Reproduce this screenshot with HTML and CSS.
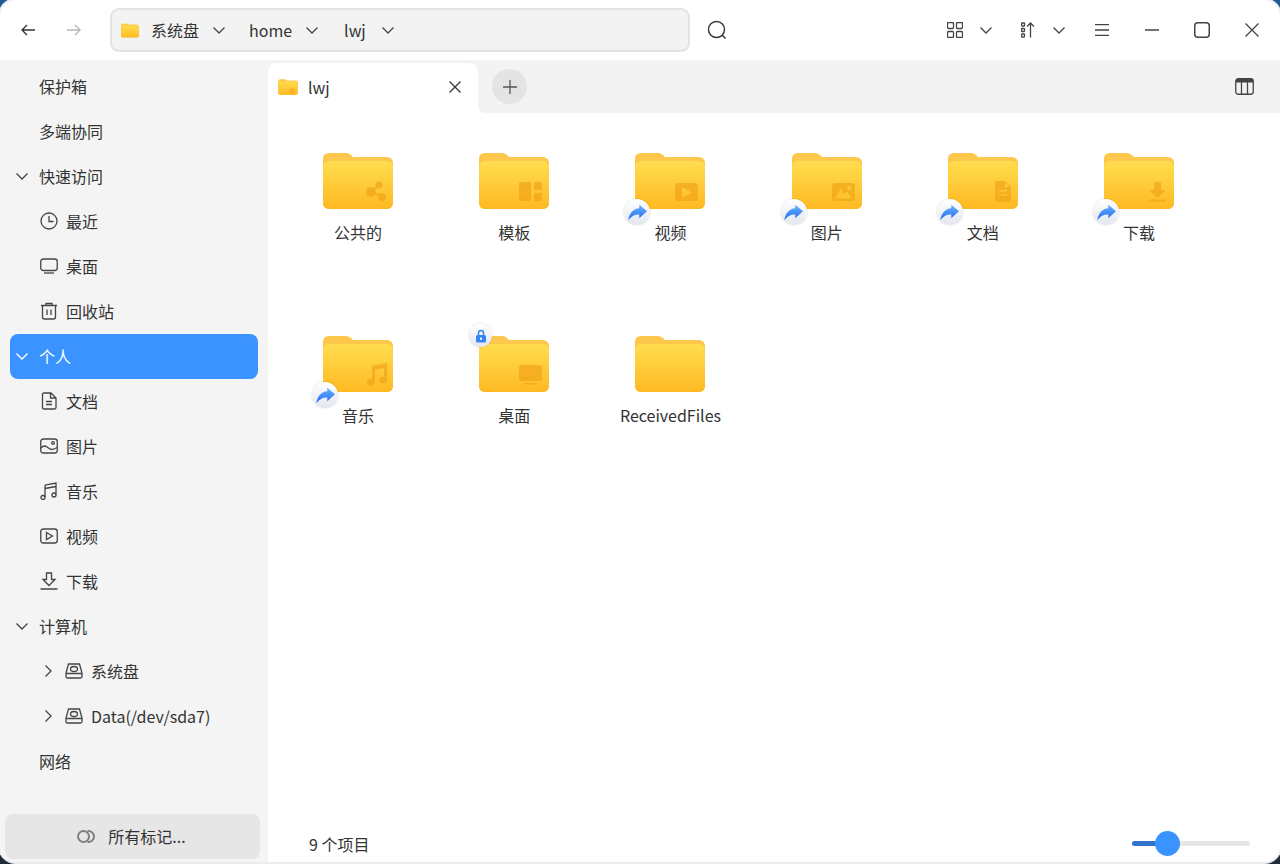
FILE: index.html
```html
<!DOCTYPE html>
<html lang="zh-CN">

<head>
    <meta charset="UTF-8">
    <title>lwj - 文件管理器</title>
    <link rel="stylesheet" href="styles.css">
</head>

<body>
    <svg class="defs" width="0" height="0">
        <defs>
            <linearGradient id="folderBack" x1="0" y1="0" x2="0" y2="1">
                <stop offset="0" stop-color="#fdc94e" />
                <stop offset="1" stop-color="#fbae1c" />
            </linearGradient>
            <linearGradient id="folderFront" x1="0" y1="0" x2="0" y2="1">
                <stop offset="0" stop-color="#ffdd4f" />
                <stop offset="1" stop-color="#ffb922" />
            </linearGradient>
            <linearGradient id="arrowFill" x1="0" y1="0" x2="0" y2="1">
                <stop offset="0" stop-color="#6db0ff" />
                <stop offset="1" stop-color="#1f6bf0" />
            </linearGradient>
            <symbol id="folder" viewBox="0 0 72 58">
                <path fill="url(#folderBack)" d="M1 7q0-6 6-6h17q3 0 5 2l3 3q1 1 3 1h30q6 0 6 6v20H1z" />
                <rect x="1" y="5" width="70" height="52" rx="6" fill="url(#folderBack)" />
                <rect x="1" y="9" width="70" height="48" rx="6" fill="url(#folderFront)" />
            </symbol>
            <symbol id="linkArrow" viewBox="0 0 16 16">
                <path fill="url(#arrowFill)" d="M9.5 1.5 16 7l-6.5 5.8V9.7C5.5 9.5 3 11 .3 14.5 1 8.5 4.5 4.800 9.500 4.400z" />
            </symbol>
        </defs>
    </svg>

    <div class="window">
        <header class="toolbar">
            <button class="nav-btn">
                <svg width="16" height="16" viewBox="0 0 16 16"><path d="M15 8H2M7 3 2 8l5 5" /></svg>
            </button>
            <button class="nav-btn nav-off">
                <svg width="16" height="16" viewBox="0 0 16 16"><path d="M1 8h13M9 3l5 5-5 5" /></svg>
            </button>

            <div class="crumbs">
                <svg class="crumb-folder" width="18" height="15" viewBox="0 0 72 58"><use href="#folder" /></svg>
                <span class="crumb">系统盘</span>
                <svg class="chev" width="12" height="12" viewBox="0 0 12 12"><path d="m.5 3.5 5.500 5.500 5.500-5.500" /></svg>
                <span class="crumb crumb-next">home</span>
                <svg class="chev" width="12" height="12" viewBox="0 0 12 12"><path d="m.5 3.5 5.500 5.500 5.500-5.500" /></svg>
                <span class="crumb crumb-last">lwj</span>
                <svg class="chev chev-last" width="12" height="12" viewBox="0 0 12 12"><path d="m.5 3.5 5.500 5.500 5.500-5.500" /></svg>
            </div>

            <svg class="search" width="20" height="20" viewBox="0 0 20 20"><circle cx="9.5" cy="9.5" r="8" /><path d="m15 15 3.5 3.5" /></svg>

            <div class="tools">
                <svg class="t-grid" width="16" height="16" viewBox="0 0 16 16"><rect x=".5" y=".5" width="6" height="6" rx="1" /><rect x="9.5" y=".5" width="6" height="6" rx="1" /><rect x=".5" y="9.5" width="6" height="6" rx="1" /><rect x="9.5" y="9.5" width="6" height="6" rx="1" /></svg>
                <svg class="chev t-chev" width="12" height="12" viewBox="0 0 12 12"><path d="m.5 3.5 5.500 5.500 5.500-5.500" /></svg>
                <svg class="t-sort" width="14" height="16" viewBox="0 0 14 16"><rect x=".5" y="1" width="3" height="3" rx=".5" /><rect x=".5" y="6.5" width="3" height="3" rx=".5" /><rect x=".5" y="12" width="3" height="3" rx=".5" /><path d="M9.5 15.5V1M6 4.5 9.5 1 13 4.5" /></svg>
                <svg class="chev t-chev" width="12" height="12" viewBox="0 0 12 12"><path d="m.5 3.5 5.500 5.500 5.500-5.500" /></svg>
                <svg class="t-menu" width="14" height="12" viewBox="0 0 14 12"><path d="M0 .5h14M0 6h14M0 11.500h14" /></svg>
                <svg class="t-min" width="14" height="14" viewBox="0 0 14 14"><path d="M0 7h14" /></svg>
                <svg class="t-max" width="16" height="16" viewBox="0 0 16 16"><rect x=".75" y=".75" width="14.500" height="14.500" rx="3" /></svg>
                <svg class="t-close" width="14" height="14" viewBox="0 0 14 14"><path d="m.5.5 13 13M13.500.5l-13 13" /></svg>
            </div>
        </header>

        <div class="main">
            <aside class="sidebar">
                <nav class="side-list">
                    <div class="side-row top-row"><span>保护箱</span></div>
                    <div class="side-row top-row"><span>多端协同</span></div>
                    <div class="side-row group-row">
                        <svg class="chev" width="12" height="12" viewBox="0 0 12 12"><path d="m.5 3.5 5.500 5.500 5.500-5.500" /></svg>
                        <span>快速访问</span>
                    </div>
                    <div class="side-row sub-row">
                        <svg width="18" height="18" viewBox="0 0 18 18"><circle cx="9" cy="9" r="8" /><path d="M9 4v5.500h4.500" /></svg>
                        <span>最近</span>
                    </div>
                    <div class="side-row sub-row">
                        <svg width="18" height="18" viewBox="0 0 18 18"><rect x=".75" y="2" width="16.500" height="11.500" rx="2.500" /><path d="M4 16h10" /></svg>
                        <span>桌面</span>
                    </div>
                    <div class="side-row sub-row">
                        <svg width="18" height="18" viewBox="0 0 18 18"><path d="M1 3.500h16M6 3.500V1.500h6v2M2.500 3.500V15q0 2 2 2h9q2 0 2-2V3.500M7 7.500V13M11 7.500V13" /></svg>
                        <span>回收站</span>
                    </div>
                    <div class="side-row group-row is-active">
                        <svg class="chev" width="12" height="12" viewBox="0 0 12 12"><path d="m.5 3.5 5.500 5.500 5.500-5.500" /></svg>
                        <span>个人</span>
                    </div>
                    <div class="side-row sub-row">
                        <svg width="18" height="18" viewBox="0 0 18 18"><path d="M4 1h7l5 5v9.500q0 1.500-1.500 1.500h-10.500q-1.500 0-1.500-1.500V2.500Q2.500 1 4 1zM10.500 1v5h5.500M6 9.500h6M6 12.500h6" /></svg>
                        <span>文档</span>
                    </div>
                    <div class="side-row sub-row">
                        <svg width="18" height="18" viewBox="0 0 18 18"><rect x=".75" y="2" width="16.500" height="14" rx="2.500" /><path d="M1 11q3-3.500 6-1t5 2.500 5-2" /><circle cx="13" cy="6" r="1.300" /></svg>
                        <span>图片</span>
                    </div>
                    <div class="side-row sub-row">
                        <svg width="18" height="18" viewBox="0 0 18 18"><path d="M5 15V4q0-1 1-1.200L16 1v11.500M5 6.500 16 4.500" /><circle cx="3" cy="15.500" r="2" /><circle cx="14" cy="13" r="2" /></svg>
                        <span>音乐</span>
                    </div>
                    <div class="side-row sub-row">
                        <svg width="18" height="18" viewBox="0 0 18 18"><rect x=".75" y="2" width="16.500" height="14" rx="2.500" /><path d="M6.500 5.500 12.500 9l-6 3.500z" /></svg>
                        <span>视频</span>
                    </div>
                    <div class="side-row sub-row">
                        <svg width="18" height="18" viewBox="0 0 18 18"><path d="M6.500 1h5v6.500h3.500L9 13.500 3 7.500h3.500zM.5 17h17" /></svg>
                        <span>下载</span>
                    </div>
                    <div class="side-row group-row">
                        <svg class="chev" width="12" height="12" viewBox="0 0 12 12"><path d="m.5 3.5 5.500 5.500 5.500-5.500" /></svg>
                        <span>计算机</span>
                    </div>
                    <div class="side-row disk-row">
                        <svg class="chev" width="12" height="12" viewBox="0 0 12 12"><path d="m3.5.5 5.500 5.500-5.500 5.500" /></svg>
                        <svg class="disk" width="18" height="16" viewBox="0 0 18 16"><path d="M3.500 1h11l2.500 9v3.500q0 1.500-1.500 1.500h-13Q1 15 1 13.500V10zM1 10.500h16" /><ellipse cx="9" cy="6" rx="3.500" ry="2.500" /></svg>
                        <span>系统盘</span>
                    </div>
                    <div class="side-row disk-row">
                        <svg class="chev" width="12" height="12" viewBox="0 0 12 12"><path d="m3.5.5 5.500 5.500-5.500 5.500" /></svg>
                        <svg class="disk" width="18" height="16" viewBox="0 0 18 16"><path d="M3.500 1h11l2.500 9v3.500q0 1.500-1.500 1.500h-13Q1 15 1 13.500V10zM1 10.500h16" /><ellipse cx="9" cy="6" rx="3.500" ry="2.500" /></svg>
                        <span>Data(/dev/sda7)</span>
                    </div>
                    <div class="side-row top-row"><span>网络</span></div>
                </nav>
                <button class="tags-btn">
                    <svg width="18" height="13" viewBox="0 0 18 13"><circle cx="6.500" cy="6.500" r="5.500" /><path d="M10.500 1h1a5.500 5.500 0 0 1 0 11h-1" /></svg>
                    <span>所有标记...</span>
                </button>
            </aside>

            <section class="content">
                <div class="tabbar">
                    <div class="tab">
                        <svg class="tab-folder" width="20" height="16" viewBox="0 0 72 58">
                            <use href="#folder" />
                            <path class="tab-home" d="m50 32 12 10h-3v11h-18v-11h-3z" />
                        </svg>
                        <span class="tab-title">lwj</span>
                        <svg class="tab-close" width="12" height="12" viewBox="0 0 12 12"><path d="m.5.5 11 11M11.500.5l-11 11" /></svg>
                    </div>
                    <button class="add-tab">
                        <svg width="14" height="14" viewBox="0 0 14 14"><path d="M7 0v14M0 7h14" /></svg>
                    </button>
                    <svg class="columns-icon" width="19" height="17" viewBox="0 0 19 17">
                        <rect x=".75" y=".75" width="17.500" height="15.500" rx="2.500" />
                        <path class="columns-top" d="M1 1h17v3.500H1z" />
                        <path d="M6.500 4v12.500M12.500 4v12.500" />
                    </svg>
                </div>

                <div class="files">
                    <div class="file">
                        <div class="file-icon">
                            <svg width="72" height="58" viewBox="0 0 72 58">
                                <use href="#folder" width="72" height="58" />
                                <g class="emblem">
                                    <circle cx="49" cy="40" r="5" /><circle cx="57" cy="33" r="3.500" /><circle cx="60" cy="45" r="4" />
                                    <path class="emblem-line" d="m49 40 8-7M49 40l11 5" />
                                </g>
                            </svg>
                        </div>
                        <div class="file-name">公共的</div>
                    </div>
                    <div class="file">
                        <div class="file-icon">
                            <svg width="72" height="58" viewBox="0 0 72 58">
                                <use href="#folder" width="72" height="58" />
                                <g class="emblem">
                                    <rect x="41" y="30" width="12" height="19" rx="1" /><rect x="56" y="30" width="8" height="8" rx="1" /><rect x="56" y="41" width="8" height="8" rx="1" />
                                </g>
                            </svg>
                        </div>
                        <div class="file-name">模板</div>
                    </div>
                    <div class="file">
                        <div class="file-icon">
                            <svg width="72" height="58" viewBox="0 0 72 58">
                                <use href="#folder" width="72" height="58" />
                                <path class="emblem" fill-rule="evenodd" d="M44 31h17q3 0 3 3v12q0 3-3 3H44q-3 0-3-3V34q0-3 3-3zM48 35v11l10-5.500z" />
                            </svg>
                            <span class="badge badge-link"><svg width="19" height="19" viewBox="0 0 16 16"><use href="#linkArrow" /></svg></span>
                        </div>
                        <div class="file-name">视频</div>
                    </div>
                    <div class="file">
                        <div class="file-icon">
                            <svg width="72" height="58" viewBox="0 0 72 58">
                                <use href="#folder" width="72" height="58" />
                                <path class="emblem" fill-rule="evenodd" d="M44 31h17q3 0 3 3v12q0 3-3 3H44q-3 0-3-3V34q0-3 3-3zM44 46.500h17l-5-7-3 3-3.500-6zM58 34a2 2 0 1 0 .01 0z" />
                            </svg>
                            <span class="badge badge-link"><svg width="19" height="19" viewBox="0 0 16 16"><use href="#linkArrow" /></svg></span>
                        </div>
                        <div class="file-name">图片</div>
                    </div>
                    <div class="file">
                        <div class="file-icon">
                            <svg width="72" height="58" viewBox="0 0 72 58">
                                <use href="#folder" width="72" height="58" />
                                <path class="emblem" fill-rule="evenodd" d="M51 29h7l6 6v12q0 3-3 3H51q-3 0-3-3V32q0-3 3-3zM52 38v1.500h8V38zM52 42v1.500h8V42zM58 30.500V35h4.500z" />
                            </svg>
                            <span class="badge badge-link"><svg width="19" height="19" viewBox="0 0 16 16"><use href="#linkArrow" /></svg></span>
                        </div>
                        <div class="file-name">文档</div>
                    </div>
                    <div class="file">
                        <div class="file-icon">
                            <svg width="72" height="58" viewBox="0 0 72 58">
                                <use href="#folder" width="72" height="58" />
                                <path class="emblem" d="M51 30h7v8h5l-8.500 8-8.500-8h5zM46 47.500h17v2H46z" />
                            </svg>
                            <span class="badge badge-link"><svg width="19" height="19" viewBox="0 0 16 16"><use href="#linkArrow" /></svg></span>
                        </div>
                        <div class="file-name">下载</div>
                    </div>
                    <div class="file">
                        <div class="file-icon">
                            <svg width="72" height="58" viewBox="0 0 72 58">
                                <use href="#folder" width="72" height="58" />
                                <path class="emblem" d="M50 31l15-3v17a4 3.500 0 1 1-3-3.300V33l-9 1.700V47a4 3.500 0 1 1-3-3.300z" />
                            </svg>
                            <span class="badge badge-link"><svg width="19" height="19" viewBox="0 0 16 16"><use href="#linkArrow" /></svg></span>
                        </div>
                        <div class="file-name">音乐</div>
                    </div>
                    <div class="file">
                        <div class="file-icon">
                            <svg width="72" height="58" viewBox="0 0 72 58">
                                <use href="#folder" width="72" height="58" />
                                <path class="emblem" d="M44 30h17q3 0 3 3v10q0 3-3 3H44q-3 0-3-3V33q0-3 3-3zM46 48h13v1.500H46z" />
                            </svg>
                            <span class="badge badge-lock">
                                <svg width="12" height="14" viewBox="0 0 12 14"><path class="lock-shackle" d="M3.500 6.500V4a2.500 2.500 0 0 1 5 0v2.500" /><rect class="lock-body" x="1" y="6" width="10" height="7.500" rx="1.500" /><rect x="5.200" y="8.500" width="1.600" height="2.500" fill="#fff" /></svg>
                            </span>
                        </div>
                        <div class="file-name">桌面</div>
                    </div>
                    <div class="file">
                        <div class="file-icon">
                            <svg width="72" height="58" viewBox="0 0 72 58"><use href="#folder" width="72" height="58" /></svg>
                        </div>
                        <div class="file-name">ReceivedFiles</div>
                    </div>
                </div>

                <footer class="statusbar">
                    <span>9 个项目</span>
                    <div class="slider"><div class="slider-fill"></div><div class="slider-thumb"></div></div>
                </footer>
            </section>
        </div>
    </div>
</body>

</html>
```

FILE: styles.css
```css
* {
    box-sizing: border-box;
}

html,
body {
    margin: 0;
    height: 100%;
}

body {
    background: linear-gradient(#1d5a94 50%, #1f2c38 50%);
    font-family: "Noto Sans CJK SC", "Noto Sans", sans-serif;
    font-size: 16px;
    color: #333;
    overflow: hidden;
}

svg {
    display: block;
    flex: none;
    fill: none;
    stroke: #444;
    stroke-width: 1.3;
}

.defs {
    position: absolute;
}

button {
    font: inherit;
    color: inherit;
    border: none;
    background: none;
    padding: 0;
}

.window {
    height: 862px;
    display: flex;
    flex-direction: column;
    background-color: white;
    border-radius: 16px;
    box-shadow: 0 0 0 2px #ebecf0;
    overflow: hidden;
}

/* top bar */
.toolbar {
    height: 60px;
    display: flex;
    align-items: center;
    padding-left: 20px;
    flex: none;
}

.nav-btn {
    width: 16px;
    margin-right: 30px;
}

.nav-btn svg {
    stroke: #333;
    stroke-width: 1.4;
}

.nav-off {
    margin-right: 28px;
}

.nav-off svg {
    stroke: #b8b8b8;
}

.crumbs {
    width: 580px;
    height: 44px;
    display: flex;
    align-items: center;
    background-color: #f3f3f3;
    border: 2px solid #e3e3e3;
    border-radius: 9px;
    padding-left: 9px;
}

.crumb-folder {
    margin-right: 12px;
    stroke: none;
}

.crumb {
    line-height: 20px;
}

.crumb-next {
    margin-left: 24px;
}

.crumb-last {
    margin-left: 26px;
}

.chev {
    stroke: #444;
    stroke-width: 1.3;
}

.crumbs .chev {
    margin-left: 14px;
}

.crumbs .chev-last {
    margin-left: 16px;
}

.search {
    margin-left: 17px;
    stroke: #333;
    stroke-width: 1.4;
}

.tools {
    margin-left: auto;
    display: flex;
    align-items: center;
    padding-right: 21px;
}

.t-chev {
    margin-left: 17px;
}

.t-sort {
    margin: 0 1px 0 29px;
}

.t-menu {
    margin-left: 30px;
}

.t-min {
    margin-left: 36px;
}

.t-max {
    margin-left: 35px;
    stroke-width: 1.5;
}

.t-close {
    margin-left: 35px;
}

.main {
    flex: 1;
    min-height: 0;
    display: flex;
}

/* sidebar */
.sidebar {
    width: 268px;
    flex: none;
    background-color: #f4f4f4;
    display: flex;
    flex-direction: column;
    padding: 4px 8px 3px 5px;
}

.side-list {
    flex: 1;
}

.side-row {
    height: 45px;
    display: flex;
    align-items: center;
    margin-left: 5px;
    margin-right: 2px;
    padding-bottom: 2px;
    border-radius: 8px;
}

.top-row {
    padding-left: 29px;
}

.group-row {
    padding-left: 6px;
}

.group-row span {
    margin-left: 11px;
}

.sub-row {
    padding-left: 30px;
}

.sub-row span {
    margin-left: 8px;
}

.disk-row {
    padding-left: 32px;
}

.disk {
    margin-left: 11px;
}

.disk-row span {
    margin-left: 8px;
}

.is-active {
    background-color: #3a93ff;
    color: white;
}

.is-active .chev {
    stroke: white;
}

.tags-btn {
    height: 45px;
    width: 255px;
    background-color: #e6e6e6;
    border-radius: 8px;
    display: flex;
    align-items: center;
    justify-content: center;
    gap: 13px;
    padding: 0 2px 1px 0;
}

.tags-btn svg {
    stroke: #808080;
    stroke-width: 2;
}

/* right side */
.content {
    flex: 1;
    min-width: 0;
    display: flex;
    flex-direction: column;
}

.tabbar {
    height: 53px;
    flex: none;
    background-color: #f3f3f3;
    display: flex;
    align-items: flex-end;
    padding-right: 26px;
}

.tab {
    position: relative;
    width: 210px;
    height: 50px;
    background-color: white;
    border-radius: 8px 8px 0 0;
    display: flex;
    align-items: center;
    padding: 0 17px 2px 10px;
}

/* small inverted corner where the tab meets the page */
.tab::after {
    content: "";
    position: absolute;
    right: -8px;
    bottom: 0;
    width: 8px;
    height: 8px;
    background: radial-gradient(circle at 100% 0, transparent 8px, white 8.5px);
}

.tab-folder {
    stroke: none;
}

.tab-home {
    fill: #f5a81c;
    opacity: 0.7;
}

.tab-title {
    margin-left: 10px;
}

.tab-close {
    margin-left: auto;
    stroke: #333;
}

.add-tab {
    width: 35px;
    height: 35px;
    margin: 0 0 9px 14px;
    border-radius: 50%;
    background-color: #e4e4e4;
    display: flex;
    align-items: center;
    justify-content: center;
}

.add-tab svg {
    stroke: #555;
}

.columns-icon {
    margin: 0 0 18px auto;
}

.columns-top {
    fill: #444;
    stroke: none;
}

.files {
    flex: 1;
    display: grid;
    grid-template-columns: repeat(6, 156.2px);
    grid-auto-rows: 183px;
    align-content: start;
    padding: 39px 0 0 12px;
}

.file {
    display: flex;
    flex-direction: column;
    align-items: center;
}

.file-icon {
    position: relative;
    width: 72px;
    height: 58px;
}

.file-icon svg {
    stroke: none;
}

.file-name {
    margin-top: 10px;
    line-height: 24px;
}

.emblem {
    fill: #ee9f14;
    opacity: 0.6;
}

.emblem-line {
    fill: none;
    stroke: #ee9f14;
    stroke-width: 2;
}

.badge {
    position: absolute;
    border-radius: 50%;
    background: linear-gradient(#fff, #e3e6ee);
    box-shadow: 0 0 2px rgba(0, 0, 0, 0.2);
    display: flex;
    align-items: center;
    justify-content: center;
}

.badge-link {
    left: -10px;
    top: 47px;
    width: 26px;
    height: 26px;
}

.badge-lock {
    left: -9px;
    top: -11px;
    width: 23px;
    height: 23px;
}

.lock-body {
    fill: #3385f5;
}

.file-icon .lock-shackle {
    fill: none;
    stroke: #3385f5;
    stroke-width: 1.5;
}

.statusbar {
    height: 36px;
    flex: none;
    display: flex;
    align-items: center;
    justify-content: space-between;
    padding: 0 30px 0 41px;
}

.slider {
    position: relative;
    width: 118px;
    height: 5px;
    margin-bottom: 1px;
    border-radius: 3px;
    background-color: #e6e6e6;
}

.slider-fill {
    width: 35px;
    height: 100%;
    border-radius: 3px;
    background-color: #3272c9;
}

.slider-thumb {
    position: absolute;
    left: 23px;
    top: -10px;
    width: 25px;
    height: 25px;
    border-radius: 50%;
    background-color: #3a93ff;
}
```
